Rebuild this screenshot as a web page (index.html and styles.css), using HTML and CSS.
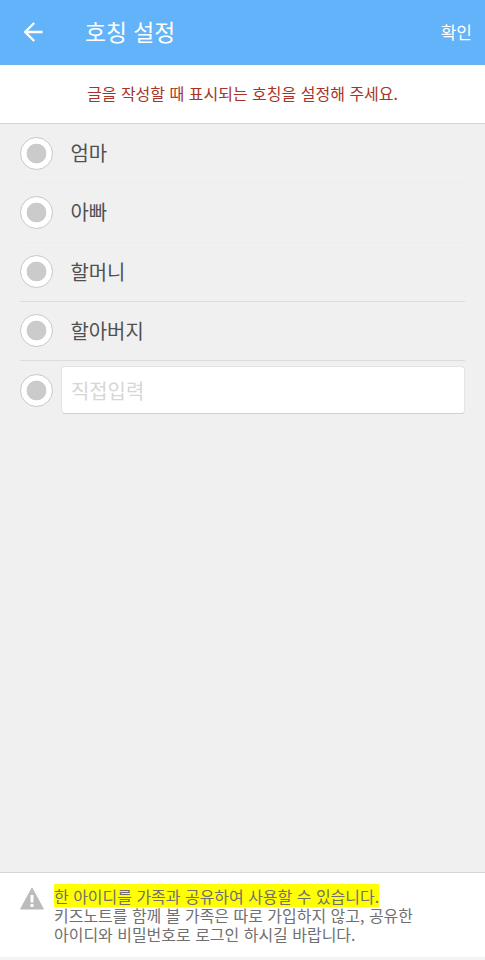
FILE: index.html
```html
<!DOCTYPE html>
<html lang="ko">

<head>
    <meta charset="UTF-8">
    <meta name="viewport" content="width=device-width, initial-scale=1.0">
    <title>호칭 설정</title>
    <link rel="stylesheet" href="styles.css">
</head>

<body>
    <header class="header">
        <svg class="back" viewBox="0 0 20 20" width="20" height="20">
            <path d="M19.5 10H2.5M11.2 1L2.2 10l9 9" fill="none" stroke="#fff" stroke-width="2.4" />
        </svg>
        <h1>호칭 설정</h1>
        <span class="confirm">확인</span>
    </header>

    <p class="notice">글을 작성할 때 표시되는 호칭을 설정해 주세요.</p>

    <form class="list">
        <label class="row faint"><input type="radio" name="title" class="radio"><span>엄마</span></label>
        <label class="row faint"><input type="radio" name="title" class="radio"><span>아빠</span></label>
        <label class="row"><input type="radio" name="title" class="radio"><span>할머니</span></label>
        <label class="row"><input type="radio" name="title" class="radio"><span>할아버지</span></label>
        <div class="row custom">
            <input type="radio" name="title" class="radio">
            <input type="text" class="custom-input" placeholder="직접입력">
        </div>
    </form>

    <footer class="footer">
        <svg class="warning" viewBox="0 0 24 23" width="24" height="23">
            <path d="M12 1L23.4 22H.6z" fill="#bbb" stroke="#bbb" stroke-linejoin="round" />
            <path d="M12 8v7.5M12 17v3" fill="none" stroke="#fff" stroke-width="3" />
        </svg>
        <div class="info">
            <mark>한 아이디를 가족과 공유하여 사용할 수 있습니다.</mark>
            <p>키즈노트를 함께 볼 가족은 따로 가입하지 않고, 공유한</p>
            <p>아이디와 비밀번호로 로그인 하시길 바랍니다.</p>
        </div>
    </footer>
</body>

</html>
```

FILE: styles.css
```css
* {
    padding: 0;
    margin: 0;
    box-sizing: border-box;
    font-family: 'Noto Sans CJK KR', sans-serif;
}

body {
    background: #f0f0f0;
    display: flex;
    flex-direction: column;
    height: 100vh;
    overflow: hidden;
}

.header {
    display: flex;
    align-items: center;
    height: 65px;
    padding: 0 13px 0 23px;
    background: #62b3f9;
    border-bottom: 1px solid #70b1ea;
    color: #fff;
}

.header h1 {
    margin-left: 42px;
    padding-bottom: 2px;
    font-size: 22.8px;
    font-weight: 400;
}

.confirm {
    margin-left: auto;
    padding-bottom: 2px;
    font-size: 17px;
}

.notice {
    height: 59px;
    line-height: 57px;
    background: #fff;
    border-bottom: 1px solid #d6d6d6;
    color: #a93328;
    font-size: 16px;
    text-align: center;
}

.list {
    flex: 1;
    padding: 0 20px;
}

.row {
    display: flex;
    align-items: center;
    height: 59.25px;
    border-bottom: 1px solid #dcdcdc;
    color: #505050;
    font-size: 19.9px;
}

.row span {
    margin-left: 17.5px;
    padding-bottom: 1px;
}

.faint {
    border-color: #ededed;
}

.radio {
    appearance: none;
    flex: none;
    width: 33px;
    height: 33px;
    border: 1px solid #c8c8c8;
    border-radius: 50%;
    background: radial-gradient(circle, #cbcbcb 9.5px, #fff 10.2px);
}

.custom {
    height: 58px;
    border: none;
}

.custom-input {
    flex: 1;
    height: 48px;
    margin-left: 8px;
    padding: 0 9px;
    border: 1px solid #e4e4e4;
    border-bottom-color: #d0d0d0;
    border-radius: 4px;
    background: #fff;
    outline: none;
    font-size: 19.9px;
}

.custom-input::placeholder {
    color: #d6d6d6;
}

.footer {
    display: flex;
    height: 88px;
    padding: 11px 20px 0;
    background: #fff;
    border-top: 1px solid #d6d6d6;
    border-bottom: 3px solid #f3f3f3;
}

.warning {
    margin-top: 3px;
}

.info {
    margin-left: 10px;
    color: #707070;
    font-size: 15.98px;
    line-height: 19.4px;
}

.info mark {
    display: block;
    width: fit-content;
    height: 23px;
    line-height: 24px;
    background: #ff0;
    color: inherit;
}

.info mark + p {
    margin-top: -1px;
}
```
